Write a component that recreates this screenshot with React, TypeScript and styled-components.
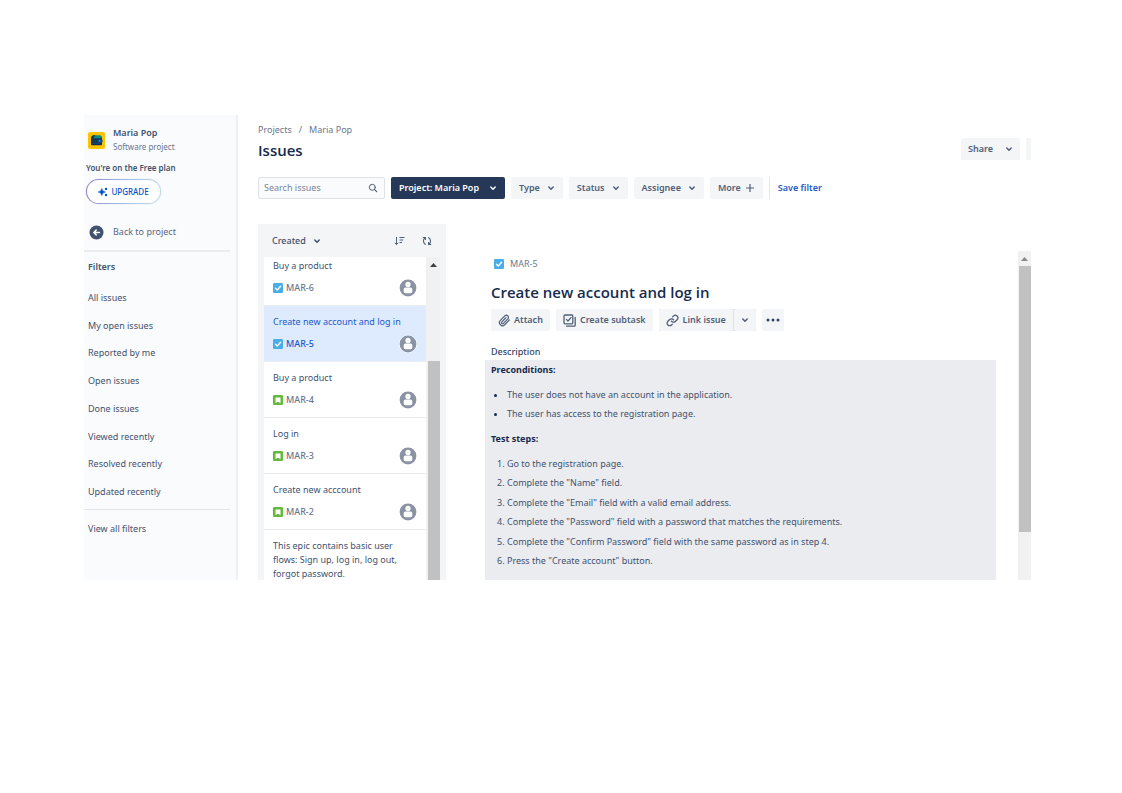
import React from 'react';
import styled, { createGlobalStyle } from 'styled-components';

const GlobalStyle = createGlobalStyle`
  * { box-sizing: border-box; }
  body { margin: 0; background: #fff; }
  button, input { font: inherit; color: inherit; }
  button { border: 0; padding: 0; background: none; cursor: pointer; }
  a { color: inherit; text-decoration: none; }
  h1, h2, h3, p, ul, ol { margin: 0; padding: 0; }
  ul { list-style: none; }
  svg { display: block; flex: none; }
`;

const Page = styled.div`
  display: flex;
  height: 100vh;
  padding: 115px 91px 213px 84px;
  font-family: 'Noto Sans', 'Open Sans', sans-serif;
  font-size: 9px;
  line-height: 14px;
  color: #42526e;
`;

const Frame = styled.div`
  flex: 1;
  min-width: 0;
  display: flex;
  overflow: hidden;
`;

/* Sidebar */

const Sidebar = styled.aside`
  flex: none;
  width: 154px;
  padding-right: 6px;
  background: #fafbfc;
  border-right: 2px solid #eff0f4;
`;

const ProjectHeader = styled.div`
  display: flex;
  align-items: center;
  gap: 8px;
  padding: 11px 4px 0;
`;

const ProjectName = styled.div`
  font-weight: 600;
`;

const Small = styled.div`
  font-size: 8px;
  color: #6b778c;
`;

const PlanNote = styled.div`
  padding: 7px 2px 0;
  font-size: 8px;
  font-weight: 600;
`;

const UpgradeButton = styled.button`
  display: flex;
  align-items: center;
  justify-content: center;
  gap: 3px;
  width: 75px;
  height: 25px;
  margin: 4px 2px 0;
  border: 1px solid transparent;
  border-radius: 13px;
  background:
    linear-gradient(#fff, #fff) padding-box,
    linear-gradient(100deg, #8d7cc4, #9fb6e0 40%, #bfdcf0) border-box;
  box-shadow: 0 0 1px #b9c3e6;
  font-size: 8px;
  font-weight: 500;
  color: #0052cc;
`;

const BackLink = styled.a`
  display: flex;
  align-items: center;
  gap: 9px;
  height: 36px;
  margin-top: 10px;
  padding-left: 5px;
  color: #5a6780;
`;

const SideSection = styled.nav`
  border-top: 2px solid #ebecf0;
  padding: 8px 4px 3px;
`;

const SideTitle = styled.h3`
  font-size: 9px;
  font-weight: 600;
  line-height: 14px;
`;

const SideList = styled.ul`
  display: flex;
  flex-direction: column;
  height: 222px;
  margin-top: 10px;
`;

const SideItem = styled.li`
  flex: 1;
  display: flex;
  align-items: center;
`;

const FooterNav = styled.nav`
  border-top: 1px solid #e1e4e9;
  padding: 12px 4px;
`;

/* Main area */

const Main = styled.main`
  flex: 1;
  min-width: 0;
  display: flex;
  flex-direction: column;
  padding-left: 20px;
`;

const Header = styled.header`
  display: flex;
  align-items: flex-end;
  justify-content: space-between;
  padding-top: 8px;
`;

const Crumbs = styled.nav`
  display: flex;
  gap: 7px;
  color: #6b778c;
`;

const PageTitle = styled.h1`
  margin-top: 3px;
  font-family: 'Open Sans', sans-serif;
  font-size: 15px;
  font-weight: 600;
  line-height: 20px;
  color: #172b4d;
`;

const HeaderActions = styled.div`
  display: flex;
  align-items: center;
  gap: 6px;
`;

const Button = styled.button<{ $dark?: boolean; $gap?: number; $pad?: number }>`
  display: flex;
  align-items: center;
  gap: ${p => p.$gap ?? 7}px;
  height: 22px;
  padding: 0 ${p => p.$pad ?? 8}px;
  border-radius: 2px;
  font-weight: 600;
  white-space: nowrap;
  color: ${p => (p.$dark ? '#fff' : '#505f79')};
  background: ${p => (p.$dark ? '#253858' : '#f4f5f7')};
`;

const EdgeButton = styled.button`
  width: 5px;
  height: 22px;
  background: #f4f5f7;
`;

const FilterBar = styled.div`
  display: flex;
  align-items: center;
  gap: 6px;
  margin-top: 17px;
`;

const SearchBox = styled.label`
  display: flex;
  align-items: center;
  width: 127px;
  height: 22px;
  padding: 0 6px 0 5px;
  border: 1px solid #dfe1e6;
  border-radius: 2px;
  background: #fafbfc;
`;

const SearchInput = styled.input`
  flex: 1;
  min-width: 0;
  padding: 0;
  border: 0;
  outline: 0;
  background: none;
  &::placeholder { color: #7a8699; opacity: 1; }
`;

const SaveFilter = styled.button`
  height: 22px;
  padding-left: 8px;
  border-left: 1px solid #e4e6ea;
  font-weight: 600;
  color: #2459c9;
`;

const Content = styled.div`
  flex: 1;
  min-height: 0;
  display: flex;
  margin-top: 25px;
`;

/* Issue list */

const ListPanel = styled.section`
  flex: none;
  display: flex;
  flex-direction: column;
  width: 188px;
  padding: 0 6px;
  background: #f4f5f7;
`;

const ListHeader = styled.div`
  flex: none;
  display: flex;
  align-items: center;
  gap: 17px;
  height: 33px;
  padding: 0 8px;
`;

const SortButton = styled.button`
  display: flex;
  align-items: center;
  gap: 7px;
  margin-right: auto;
  font-weight: 500;
`;

const ListBody = styled.div`
  flex: 1;
  min-height: 0;
  display: flex;
  overflow: hidden;
`;

const Issues = styled.ul`
  flex: 1;
  min-width: 0;
`;

const IssueCard = styled.li<{ $selected?: boolean }>`
  padding: 9px 9px 8px;
  border-bottom: 1px solid #ebecf0;
  background: ${p => (p.$selected ? '#deebff' : '#fff')};
  color: ${p => (p.$selected ? '#2459c9' : '#42526e')};
  &:first-child { padding-top: 2px; }
`;

const IssueMeta = styled.div`
  display: flex;
  align-items: center;
  height: 18px;
  margin-top: 6px;
`;

const IssueKey = styled.span<{ $selected?: boolean }>`
  flex: 1;
  padding-left: 3px;
  font-weight: 500;
  color: ${p => (p.$selected ? '#2459c9' : '#6b778c')};
`;

const Track = styled.div`
  flex: none;
  display: flex;
  flex-direction: column;
  width: 13px;
  background: #f1f1f1;
`;

const ListTrack = styled(Track)`
  width: 14px;
  padding-left: 1px;
`;

const DetailTrack = styled(Track)`
  margin-top: 27px;
`;

const ArrowBox = styled.div<{ $size: number }>`
  flex: none;
  display: grid;
  place-items: center;
  height: ${p => p.$size}px;
`;

const Thumb = styled.div<{ $before: number; $after: number }>`
  flex: 1;
  margin: ${p => p.$before}px 0 ${p => p.$after}px 1px;
  background: #c1c1c1;
`;

/* Issue detail */

const Detail = styled.article`
  flex: 1;
  min-width: 0;
  display: flex;
  flex-direction: column;
  padding: 33px 22px 0 39px;
  overflow: hidden;
`;

const DetailKey = styled.a`
  display: flex;
  align-items: center;
  gap: 6px;
  padding-left: 9px;
  color: #6b778c;
`;

const DetailTitle = styled.h2`
  margin-top: 10px;
  padding-left: 6px;
  font-family: 'Open Sans', sans-serif;
  font-size: 15px;
  font-weight: 600;
  line-height: 22px;
  color: #172b4d;
`;

const DetailActions = styled.div`
  display: flex;
  gap: 6px;
  margin-top: 6px;
  padding-left: 6px;
`;

const SplitButton = styled.div`
  display: flex;
  gap: 1px;
  background: #dfe1e6;
`;

const FieldLabel = styled.h3`
  margin-top: 14px;
  padding-left: 6px;
  font-size: 9px;
  font-weight: 500;
  line-height: 14px;
  color: #344563;
`;

const Description = styled.div`
  flex: 1;
  margin-top: 1px;
  padding: 3px 6px;
  background: #ebecf0;
  color: #42526e;
  overflow: hidden;
`;

const Strong = styled.p`
  font-weight: 700;
  color: #172b4d;
`;

const Bullets = styled.ul`
  display: grid;
  gap: 5px;
  margin: 11px 0;
  padding-left: 16px;
  list-style: disc;
`;

const Steps = styled.ol`
  display: grid;
  align-content: space-between;
  height: 111px;
  margin: 11px 0;
  padding-left: 16px;
`;

const Bullet = styled.li`
  &::marker { color: #172b4d; }
`;

/* Icons */

const Chevron = () => (
  <svg width="8" height="8" viewBox="0 0 8 8" fill="none" stroke="currentColor" strokeWidth="1.5" strokeLinecap="round" strokeLinejoin="round">
    <path d="M1.8 3 4 5.2 6.2 3" />
  </svg>
);

const ProjectLogo = () => (
  <svg width="17" height="17" viewBox="0 0 17 17">
    <rect width="17" height="17" rx="2" fill="#ffc400" />
    <rect x="3" y="4.500" width="11" height="8.800" rx="1" fill="#1c2f55" />
    <path d="M3.800 4.600 5 3.200h7.400l1.400 1.500v1.500H3.600z" fill="#0b8a8a" />
    <path d="M5 3.200h2.600L5.400 6H3.400V4.800z" fill="#253858" />
    <path d="M4 9h6M4 11.400h8" stroke="#0c5a80" strokeWidth="0.800" />
    <rect x="10" y="7.600" width="4.600" height="2.800" rx="0.800" fill="#0a4f8f" />
    <circle cx="11.600" cy="9" r="0.700" fill="#2ad0ff" />
  </svg>
);

const Sparkles = () => (
  <svg width="10" height="10" viewBox="0 0 10 10" fill="#0052cc">
    <path d="M3.800 1.400 4.900 3.900 7.400 5 4.900 6.100 3.800 8.600 2.700 6.100.2 5l2.500-1.100z" stroke="#0052cc" strokeWidth="0.500" strokeLinejoin="round" />
    <circle cx="8" cy="1.900" r="1.200" />
    <circle cx="8" cy="8" r="1.200" />
  </svg>
);

const BackIcon = () => (
  <svg width="15" height="15" viewBox="0 0 15 15">
    <circle cx="7.500" cy="7.500" r="7" fill="#42526e" />
    <path d="M10.500 7.500H4.800M7.200 5.100 4.800 7.500l2.400 2.400" fill="none" stroke="#fff" strokeWidth="1.500" strokeLinecap="round" strokeLinejoin="round" />
  </svg>
);

const SearchIcon = () => (
  <svg width="10" height="10" viewBox="0 0 10 10" fill="none" stroke="#505f79" strokeLinecap="round">
    <circle cx="4.300" cy="4.300" r="3" />
    <path d="M6.600 6.600 8.700 8.700" strokeWidth="1.200" />
  </svg>
);

const PlusIcon = () => (
  <svg width="10" height="10" viewBox="0 0 10 10" stroke="currentColor" strokeWidth="1.200">
    <path d="M5 1v8M1 5h8" />
  </svg>
);

const SortIcon = () => (
  <svg width="11" height="10" viewBox="0 0 11 10" fill="none" stroke="#505f79">
    <path d="M2.500 1v7.500M.8 6.800l1.700 1.800 1.700-1.800M5.500 1.500h5M5.500 4h3.800M5.500 6.500h2.500" />
  </svg>
);

const RefreshIcon = () => (
  <svg width="10" height="10" viewBox="0 0 10 10" fill="none" stroke="#505f79" strokeWidth="1.100">
    <path d="M3.800 8.500C1 7.500.8 3.500 2.800 1.800M.8 1.500h2.600v2.400M6.200 1.500C9 2.500 9.200 6.500 7.200 8.200M9.200 8.500H6.600V6.100" />
  </svg>
);

const TaskIcon = () => (
  <svg width="10" height="10" viewBox="0 0 10 10">
    <rect width="10" height="10" rx="1.200" fill="#4bade8" />
    <path d="M2.500 5.200 4.300 7 7.600 3.300" fill="none" stroke="#fff" strokeWidth="1.400" strokeLinecap="round" strokeLinejoin="round" />
  </svg>
);

const StoryIcon = () => (
  <svg width="10" height="10" viewBox="0 0 10 10">
    <rect width="10" height="10" rx="1.200" fill="#63ba3c" />
    <path d="M2.500 2.400h5v5.500L5 6.800 2.500 7.900z" fill="#fff" />
  </svg>
);

const Avatar = () => (
  <svg width="18" height="18" viewBox="0 0 18 18">
    <circle cx="9" cy="9" r="9" fill="#fff" />
    <circle cx="9" cy="9" r="8.400" fill="#8993a4" />
    <circle cx="9" cy="5.400" r="2.600" fill="#fff" />
    <rect x="4.700" y="8.600" width="8.600" height="5.600" rx="2" fill="#fff" />
  </svg>
);

const AttachIcon = () => (
  <svg width="13" height="13" viewBox="0 0 24 24" fill="none" stroke="currentColor" strokeWidth="2.200" strokeLinecap="round">
    <path d="m21 11-8.600 8.800a5.600 5.600 0 0 1-8-8L12.600 3.600a3.900 3.900 0 0 1 5.600 5.500l-8.200 8.200a2 2 0 0 1-2.900-2.900L14.500 7" />
  </svg>
);

const SubtaskIcon = () => (
  <svg width="13" height="13" viewBox="0 0 13 13" fill="none" stroke="currentColor" strokeWidth="1.300" strokeLinecap="round" strokeLinejoin="round">
    <rect x="1" y="1" width="8.800" height="8.800" rx="1" />
    <path d="M3.400 5.400 5 7l3-3.400M12.200 3.500v7.700a1 1 0 0 1-1 1H3.500" />
  </svg>
);

const LinkIcon = () => (
  <svg width="13" height="13" viewBox="0 0 24 24" fill="none" stroke="currentColor" strokeWidth="2.400" strokeLinecap="round">
    <path d="M10 13.500a5 5 0 0 0 7.200.2l3.300-3.200a4.700 4.700 0 0 0-6.700-6.700l-1.600 1.500" />
    <path d="M14 10.500a5 5 0 0 0-7.200-.2l-3.300 3.200a4.700 4.700 0 0 0 6.700 6.700l1.600-1.500" />
  </svg>
);

const MoreIcon = () => (
  <svg width="14" height="4" viewBox="0 0 14 4" fill="#344563">
    <circle cx="2" cy="2" r="1.500" />
    <circle cx="7" cy="2" r="1.500" />
    <circle cx="12" cy="2" r="1.500" />
  </svg>
);

const ArrowUp = ({ color }: { color: string }) => (
  <svg width="7" height="4" viewBox="0 0 7 4" fill={color}>
    <path d="M3.500 0 7 4H0z" />
  </svg>
);

const filters = [
  'All issues', 'My open issues', 'Reported by me', 'Open issues',
  'Done issues', 'Viewed recently', 'Resolved recently', 'Updated recently',
];

const issues = [
  { key: 'MAR-6', title: 'Buy a product', type: 'task' },
  { key: 'MAR-5', title: 'Create new account and log in', type: 'task', selected: true },
  { key: 'MAR-4', title: 'Buy a product', type: 'story' },
  { key: 'MAR-3', title: 'Log in', type: 'story' },
  { key: 'MAR-2', title: 'Create new acccount', type: 'story' },
];

const steps = [
  'Go to the registration page.',
  'Complete the "Name" field.',
  'Complete the "Email" field with a valid email address.',
  'Complete the "Password" field with a password that matches the requirements.',
  'Complete the "Confirm Password" field with the same password as in step 4.',
  'Press the "Create account" button.',
];

export default function App() {
  return (
    <Page>
      <GlobalStyle />
      <Frame>
        <Sidebar>
          <ProjectHeader>
            <ProjectLogo />
            <div>
              <ProjectName>Maria Pop</ProjectName>
              <Small>Software project</Small>
            </div>
          </ProjectHeader>
          <PlanNote>You're on the Free plan</PlanNote>
          <UpgradeButton><Sparkles />UPGRADE</UpgradeButton>
          <BackLink href="#"><BackIcon />Back to project</BackLink>
          <SideSection>
            <SideTitle>Filters</SideTitle>
            <SideList>
              {filters.map(f => <SideItem key={f}><a href="#">{f}</a></SideItem>)}
            </SideList>
          </SideSection>
          <FooterNav><a href="#">View all filters</a></FooterNav>
        </Sidebar>

        <Main>
          <Header>
            <div>
              <Crumbs><a href="#">Projects</a><span>/</span><a href="#">Maria Pop</a></Crumbs>
              <PageTitle>Issues</PageTitle>
            </div>
            <HeaderActions>
              <Button $gap={12} $pad={7}>Share<Chevron /></Button>
              <EdgeButton aria-label="More actions" />
            </HeaderActions>
          </Header>

          <FilterBar>
            <SearchBox>
              <SearchInput aria-label="Search issues" placeholder="Search issues" />
              <SearchIcon />
            </SearchBox>
            <Button $dark $gap={10}>Project: Maria Pop<Chevron /></Button>
            <Button>Type<Chevron /></Button>
            <Button>Status<Chevron /></Button>
            <Button>Assignee<Chevron /></Button>
            <Button $gap={4}>More<PlusIcon /></Button>
            <SaveFilter>Save filter</SaveFilter>
          </FilterBar>

          <Content>
            <ListPanel>
              <ListHeader>
                <SortButton>Created<Chevron /></SortButton>
                <button aria-label="Sort direction"><SortIcon /></button>
                <button aria-label="Refresh"><RefreshIcon /></button>
              </ListHeader>
              <ListBody>
                <Issues>
                  {issues.map(i => (
                    <IssueCard key={i.key} $selected={i.selected}>
                      {i.title}
                      <IssueMeta>
                        {i.type === 'task' ? <TaskIcon /> : <StoryIcon />}
                        <IssueKey $selected={i.selected}>{i.key}</IssueKey>
                        <Avatar />
                      </IssueMeta>
                    </IssueCard>
                  ))}
                  <IssueCard>This epic contains basic user flows: Sign up, log in, log out, forgot password.</IssueCard>
                </Issues>
                <ListTrack>
                  <ArrowBox $size={16}><ArrowUp color="#404040" /></ArrowBox>
                  <Thumb $before={88} $after={0} />
                </ListTrack>
              </ListBody>
            </ListPanel>

            <Detail>
              <DetailKey href="#"><TaskIcon />MAR-5</DetailKey>
              <DetailTitle>Create new account and log in</DetailTitle>
              <DetailActions>
                <Button $gap={3} $pad={7}><AttachIcon />Attach</Button>
                <Button $gap={4} $pad={7}><SubtaskIcon />Create subtask</Button>
                <SplitButton>
                  <Button $gap={4} $pad={7}><LinkIcon />Link issue</Button>
                  <Button $pad={7} aria-label="Link options"><Chevron /></Button>
                </SplitButton>
                <Button $pad={4} aria-label="More"><MoreIcon /></Button>
              </DetailActions>
              <FieldLabel>Description</FieldLabel>
              <Description>
                <Strong>Preconditions:</Strong>
                <Bullets>
                  <Bullet>The user does not have an account in the application.</Bullet>
                  <Bullet>The user has access to the registration page.</Bullet>
                </Bullets>
                <Strong>Test steps:</Strong>
                <Steps>{steps.map(s => <li key={s}>{s}</li>)}</Steps>
              </Description>
            </Detail>
            <DetailTrack>
              <ArrowBox $size={15}><ArrowUp color="#8a8a8a" /></ArrowBox>
              <Thumb $before={0} $after={48} />
            </DetailTrack>
          </Content>
        </Main>
      </Frame>
    </Page>
  );
}
